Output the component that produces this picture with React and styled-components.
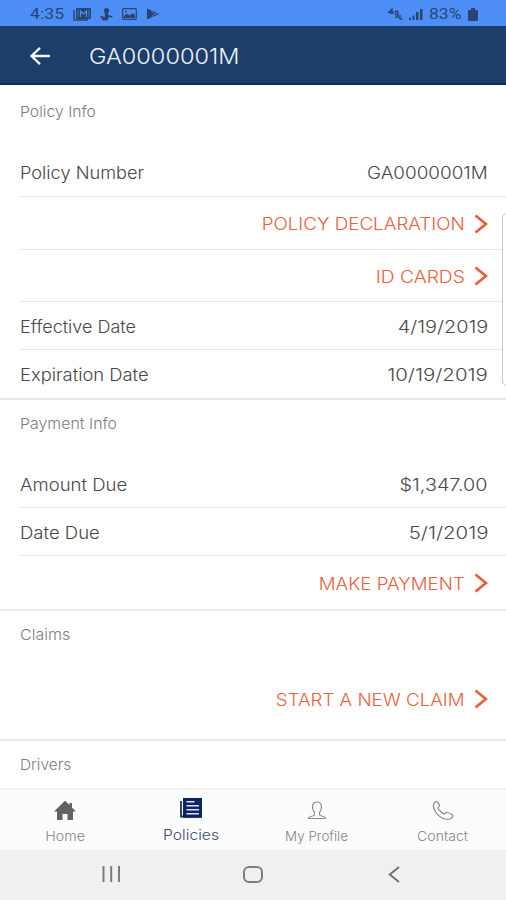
import React from 'react';
import styled, { createGlobalStyle, css } from 'styled-components';

const GlobalStyle = createGlobalStyle`
  *, *::before, *::after { box-sizing: border-box; }
  body { margin: 0; background: #fff; font-family: Inter, "Liberation Sans", sans-serif; font-weight: 300; }
`;

const Screen = styled.div`
  position: relative;
  display: flex;
  flex-direction: column;
  width: 506px;
  height: 900px;
  overflow: hidden;
  background: #fff;
`;

const StatusBar = styled.header`
  display: flex;
  align-items: center;
  justify-content: space-between;
  flex: none;
  height: 26px;
  padding: 2px 28px 0 30px;
  background: #4e8ef7;
  color: #29456f;
  font: 400 15.5px/24px Roboto, sans-serif;
`;

const StatusGroup = styled.div`
  display: flex;
  align-items: center;
  gap: ${(p) => p.$gap}px;
`;

/* Extended-width text: the label grows from the given edge. */
const Wide = styled.span`
  display: inline-block;
  white-space: nowrap;
  transform: scaleX(${(p) => p.$x});
  transform-origin: ${(p) => p.$from || 'left'} center;
`;

const Clock = styled.span`
  width: 35px;
  margin-right: -1px;
`;

const Battery = styled.span`
  width: 33px;
`;

const AppBar = styled.div`
  display: flex;
  align-items: center;
  flex: none;
  gap: 38px;
  height: 59px;
  padding: 3px 28px 0;
  background: #1c3e6b;
  border-bottom: 2px solid #0b2a60;
  color: #eef2f8;
`;

const Title = styled.h1`
  margin: 0;
  padding-top: 1px;
  font-size: 21px;
  line-height: 28px;
  font-weight: 300;
`;

const Content = styled.main`
  flex: 1;
  min-height: 0;
  overflow: hidden;
`;

const Section = styled.section`
  border-bottom: 2px solid #e9e9e9;
`;

const SectionTitle = styled.h2`
  height: ${(p) => p.$h}px;
  margin: 0;
  padding: ${(p) => p.$top || 12}px 0 0 20px;
  color: #7d7d7d;
  font-size: 15px;
  line-height: 24px;
  font-weight: 300;
`;

const Row = styled.div`
  display: flex;
  align-items: center;
  justify-content: space-between;
  height: ${(p) => p.$h}px;
  margin-left: 20px;
  padding: 2px 18px 0 0;
  color: #484848;
  font-size: 17px;
  line-height: 24px;
  ${(p) => !p.$last && css`border-bottom: 1.5px solid #e6e6e6;`}
`;

const ActionRow = styled(Row)`
  justify-content: flex-end;
  gap: 9px;
  padding-top: 1px;
  color: #e9603d;
`;

const ActionLabel = styled(Wide)`
  padding-top: 1px;
`;

const EdgeHandle = styled.div`
  position: absolute;
  top: 213px;
  right: -8px;
  width: 12px;
  height: 173px;
  border: 1px solid #c9c9c9;
  border-radius: 5px;
  background: #fff;
`;

const TabBar = styled.nav`
  display: grid;
  grid-template-columns: repeat(4, 1fr);
  flex: none;
  height: 62px;
  padding-left: 2px;
  border-top: 2px solid #f1f1f1;
  background: #fcfcfc;
`;

const Tab = styled.a`
  display: flex;
  flex-direction: column;
  align-items: center;
  padding-top: ${(p) => (p.$active ? 7 : 10)}px;
  gap: ${(p) => (p.$active ? 7 : 5)}px;
  color: ${(p) => (p.$active ? '#3c4a70' : '#858585')};
  font-size: ${(p) => (p.$active ? 14 : 13)}px;
  line-height: 18px;
`;

const SystemNav = styled.div`
  display: flex;
  align-items: center;
  justify-content: space-between;
  flex: none;
  height: 50px;
  padding: 0 106px 2px 101px;
  background: #f0f0f0;
`;

const Chevron = () => (
  <svg width="14" height="20" viewBox="0 0 14 20" fill="none" stroke="#f05a33" strokeWidth="2.7">
    <path d="M1.5 1.5 12 10 1.5 18.5" />
  </svg>
);

const BackArrow = () => (
  <svg width="23" height="20" viewBox="0 0 23 20" fill="none" stroke="#f4f7fb" strokeWidth="2.3">
    <path d="M22 10H4M12 1.8 3.5 10l8.500 8.200" />
  </svg>
);

const GalleryMail = () => (
  <svg width="18" height="13" viewBox="0 0 18 13">
    <path d="M1 2v10h14" fill="none" stroke="#29456f" strokeWidth="1.500" />
    <rect x="3" y="0" width="15" height="11" rx="1" fill="#29456f" />
    <path d="M5 1.500v8M16 1.500v8" stroke="#4e8ef7" strokeWidth=".7" />
    <path d="M7.500 9V3l3 3 3-3v6" fill="none" stroke="#4e8ef7" strokeWidth="1.100" />
  </svg>
);

const Touch = () => (
  <svg width="13" height="13" viewBox="0 0 13 13" fill="#29456f">
    <circle cx="6.500" cy="2.600" r="2.600" />
    <path d="M4.800 3h3.400v4l4.600 1.200-1 1.300-3-.5L7.500 12.500H3L0 8.500l1.500-.6 3.300 1.300z" />
  </svg>
);

const Picture = () => (
  <svg width="15" height="12" viewBox="0 0 15 12">
    <rect x=".7" y=".7" width="13.600" height="10.600" rx="1" fill="none" stroke="#29456f" strokeWidth="1.300" />
    <path d="M2 10V8l3-2.500 2.500 2L11 5l2 2.500V10z" fill="#29456f" />
    <circle cx="4" cy="3.500" r="1" fill="#29456f" />
  </svg>
);

const PlayStore = () => (
  <svg width="14" height="12" viewBox="0 0 14 12">
    <path d="M1 .5 13.500 6 1 11.500z" fill="#29456f" />
    <path d="M5 2.500 8.500 6 5 9.500M8.500 6h3" fill="none" stroke="#4e8ef7" strokeWidth=".8" />
  </svg>
);

const Network = () => (
  <svg width="15" height="12" viewBox="0 0 15 12" fill="none" stroke="#29456f" strokeWidth="1.400">
    <path d="M4 6.500V1L.8 4.500H6M10 3.200H7.500v3.600H10V3.200v6H7.200M12 7v4.500M12 11h2.500" />
  </svg>
);

const Signal = () => (
  <svg width="14" height="12" viewBox="0 0 14 12" fill="#29456f">
    <path d="M0 9.500h2V12H0zM3.500 7.500h2V12h-2zM7 4h2.500v8H7zM11 1h2.500v11H11z" />
  </svg>
);

const BatteryIcon = () => (
  <svg width="10" height="13" viewBox="0 0 10 13" fill="#29456f">
    <path d="M3 0h4v2h2a1 1 0 0 1 1 1v9a1 1 0 0 1-1 1H1a1 1 0 0 1-1-1V3a1 1 0 0 1 1-1h2z" />
  </svg>
);

const HomeIcon = () => (
  <svg width="24" height="22" viewBox="0 0 24 22" fill="#626262">
    <path d="M12 .8 16.500 5V3H19v4.500l4 4h-3V20h-5.500v-6h-5v6H4v-8.500H1z" />
  </svg>
);

const PoliciesIcon = () => (
  <svg width="24" height="22" viewBox="0 0 24 22">
    <path d="M2 4v15.500H20" fill="none" stroke="#1b2f66" strokeWidth="1.800" />
    <rect x="4" y="1" width="19" height="19.800" fill="#0d2463" />
    <path d="M7.500 4.700h8M7.500 8.700h12.500M7.500 12.700h12.500M7.500 16.700h12.500" stroke="#d8e4f5" strokeWidth="1.400" />
  </svg>
);

const ProfileIcon = () => (
  <svg width="22" height="22" viewBox="0 0 22 22" fill="none" stroke="#8a8a8a" strokeWidth="1.200">
    <path d="M8.500 12.500C7.200 11 6.500 9.500 6.500 7 6.500 3.700 8 2 11 2s4.500 1.700 4.500 5c0 2.500-.7 4-2 5.500v1.700c0 1 .6 1.500 2 1.800 2.800.5 4 1 4 2.500h-17c0-1.500 1.200-2 4-2.500 1.400-.3 2-.8 2-1.800z" />
  </svg>
);

const PhoneIcon = () => (
  <svg width="24" height="22" viewBox="0 0 24 22" fill="none" stroke="#8a8a8a" strokeWidth="1.200">
    <path d="M3 3c1-1.200 2.200-1.800 3.200-1 .9.800 1.900 2.200 2.300 3.200.4 1.200-1 1.800-1.600 2.600-.5.800 5.200 6.500 6.400 6.100 1-.4 1.500-1.700 2.800-1.400 1.600.3 4.300 1.600 5.400 2.500 1 .9-.6 3-2 3.700-5 1.600-9.500-.8-12.600-3.900C3.800 11.700 1 6.500 3 3z" />
  </svg>
);

const Recents = () => (
  <svg width="20" height="16" viewBox="0 0 20 16" stroke="#7c7c7c" strokeWidth="2">
    <path d="M2.500 0v16M10.200 0v16M18 0v16" />
  </svg>
);

const HomeKey = styled.span`
  width: 20px;
  height: 17px;
  margin-right: 4px;
  border: 2px solid #7c7c7c;
  border-radius: 6px;
`;

const BackKey = () => (
  <svg width="12" height="17" viewBox="0 0 12 17" fill="none" stroke="#6f6f6f" strokeWidth="1.900">
    <path d="M11 1 1.800 8.500 11 16" />
  </svg>
);

const Detail = ({ h, label, lx, value, vx, last }) => (
  <Row $h={h} $last={last}>
    <Wide $x={lx}>{label}</Wide>
    <Wide $x={vx} $from="right">{value}</Wide>
  </Row>
);

const Action = ({ h, label, x, last }) => (
  <ActionRow $h={h} $last={last}>
    <ActionLabel $x={x} $from="right">{label}</ActionLabel>
    <Chevron />
  </ActionRow>
);

export default function App() {
  return (
    <>
      <GlobalStyle />
      <Screen>
        <StatusBar>
          <StatusGroup $gap={9}>
            <Clock><Wide $x={1.14}>4:35</Wide></Clock>
            <GalleryMail />
            <Touch />
            <Picture />
            <PlayStore />
          </StatusGroup>
          <StatusGroup $gap={6}>
            <Network />
            <Signal />
            <Battery><Wide $x={1.13}>83%</Wide></Battery>
            <BatteryIcon />
          </StatusGroup>
        </StatusBar>
        <AppBar>
          <BackArrow />
          <Title><Wide $x={1.12}>GA0000001M</Wide></Title>
        </AppBar>
        <Content>
          <Section>
            <SectionTitle $h={63} $top={15}><Wide $x={1.05}>Policy Info</Wide></SectionTitle>
            <Detail h={49} label="Policy Number" lx={1.07} value="GA0000001M" vx={1.11} />
            <Action h={53} label="POLICY DECLARATION" x={1.105} />
            <Action h={52} label="ID CARDS" x={1.13} />
            <Detail h={48} label="Effective Date" lx={1.06} value="4/19/2019" vx={1.17} />
            <Detail h={48} label="Expiration Date" lx={1.08} value="10/19/2019" vx={1.2} last />
          </Section>
          <Section>
            <SectionTitle $h={60}><Wide $x={1.06}>Payment Info</Wide></SectionTitle>
            <Detail h={48} label="Amount Due" lx={1.09} value="$1,347.00" vx={1.165} />
            <Detail h={48} label="Date Due" lx={1.09} value="5/1/2019" vx={1.2} />
            <Action h={53} label="MAKE PAYMENT" x={1.1} last />
          </Section>
          <Section>
            <SectionTitle $h={47}><Wide $x={1.07}>Claims</Wide></SectionTitle>
            <Action h={81} label="START A NEW CLAIM" x={1.1} last />
          </Section>
          <SectionTitle $h={48}><Wide $x={1.03}>Drivers</Wide></SectionTitle>
        </Content>
        <TabBar>
          <Tab><HomeIcon /><Wide $x={1.1} $from="center">Home</Wide></Tab>
          <Tab $active><PoliciesIcon /><Wide $x={1.12} $from="center">Policies</Wide></Tab>
          <Tab><ProfileIcon /><Wide $x={1.03} $from="center">My Profile</Wide></Tab>
          <Tab><PhoneIcon /><Wide $x={1.08} $from="center">Contact</Wide></Tab>
        </TabBar>
        <SystemNav>
          <Recents />
          <HomeKey />
          <BackKey />
        </SystemNav>
        <EdgeHandle />
      </Screen>
    </>
  );
}
